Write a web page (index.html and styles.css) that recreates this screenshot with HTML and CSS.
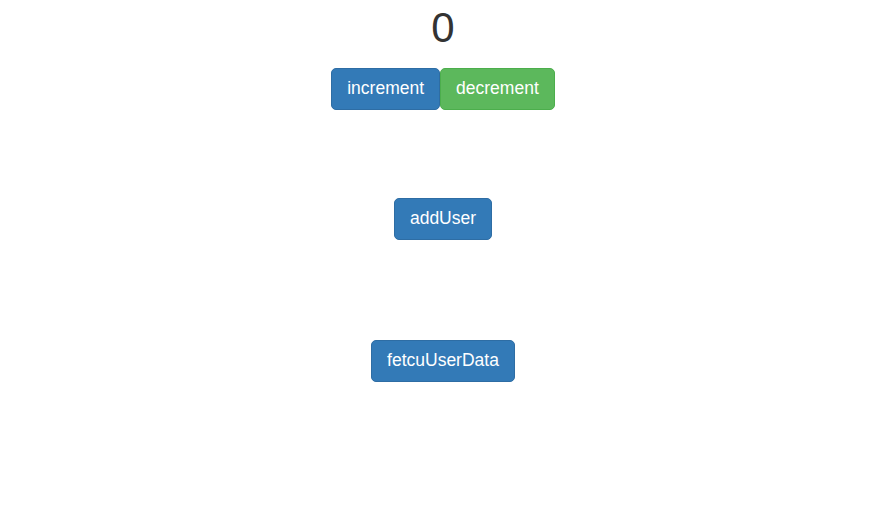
FILE: index.html
```html
<!DOCTYPE html>
<html>
<head>
<meta charset="utf-8">
<link rel="stylesheet" href="styles.css">
</head>
<body>
<main class="app">
  <section class="counter">
    <h1 class="count">0</h1>
    <div class="btn-row">
      <button class="btn btn-primary">increment</button>
      <button class="btn btn-success">decrement</button>
    </div>
  </section>
  <section class="block add">
    <button class="btn btn-primary">addUser</button>
  </section>
  <section class="block fetch">
    <button class="btn btn-primary">fetcuUserData</button>
  </section>
</main>
</body>
</html>
```

FILE: styles.css
```css
html, body {
  margin: 0;
  padding: 0;
  background: #fff;
}
body {
  padding-left: 8px;
  font-family: "Liberation Sans", Arial, Helvetica, sans-serif;
  color: #333;
}
.app {
  display: flex;
  flex-direction: column;
  align-items: center;
  padding-top: 5px;
}
.counter {
  display: flex;
  flex-direction: column;
  align-items: center;
}
.count {
  margin: 0;
  font-size: 42px;
  font-weight: 400;
  line-height: 46px;
  color: #333;
}
.btn-row {
  display: flex;
  margin-top: 17px;
}
.btn {
  font-family: "Liberation Sans", Arial, Helvetica, sans-serif;
  font-size: 17.5px;
  line-height: 20px;
  padding: 9px 15px 11px;
  border: 1px solid transparent;
  border-radius: 5px;
  color: #fff;
  cursor: pointer;
  margin: 0;
}
.btn-primary {
  background: #337ab7;
  border-color: #2e6da4;
}
.btn-success {
  background: #5cb85c;
  border-color: #4cae4c;
}
.add {
  margin-top: 88px;
}
.fetch {
  margin-top: 100px;
}
```
